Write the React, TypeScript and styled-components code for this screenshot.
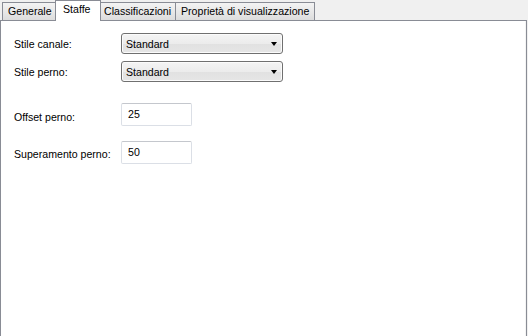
import React from "react";
import styled, { createGlobalStyle, css } from "styled-components";

const GlobalStyle = createGlobalStyle`
  html, body {
    margin: 0;
    padding: 0;
    background: #f0f0f0;
  }
  body {
    font-family: Tahoma, "Liberation Sans", Arial, sans-serif;
    font-size: 10.6px;
    color: #000;
  }
`;

const Window = styled.div`
  width: 528px;
  height: 336px;
  overflow: hidden;
  background: #f0f0f0;
  display: flex;
  flex-direction: column;
`;

const TabStrip = styled.div`
  display: flex;
  align-items: flex-end;
  height: 20px;
  padding-left: 2px;
  flex-shrink: 0;
`;

const Tab = styled.div<{ $width: number; $active?: boolean }>`
  box-sizing: border-box;
  width: ${(p) => p.$width}px;
  height: 18px;
  border: 1px solid #898c95;
  border-bottom: none;
  margin-left: -1px;
  padding: 1px 0 0 5px;
  line-height: 15px;
  white-space: nowrap;
  overflow: hidden;
  background: linear-gradient(#f3f3f3, #e6e6e6 60%, #dcdcdc);
  &:first-child {
    margin-left: 0;
  }
  ${(p) =>
    p.$active &&
    css`
      position: relative;
      z-index: 2;
      height: 21px;
      margin: 0 -2px -1px -2px;
      padding: 1px 0 0 7px;
      background: #fff;
    `}
`;

const Panel = styled.div`
  box-sizing: border-box;
  width: 527px;
  flex: 1;
  background: #fff;
  border: 1px solid #898c95;
  border-bottom: none;
  box-shadow: inset -1px 0 0 #f4f4f4;
  padding: 12px 0 0 13px;
`;

const FieldGroup = styled.div<{ $gap: number; $top?: number }>`
  display: flex;
  flex-direction: column;
  gap: ${(p) => p.$gap}px;
  margin-top: ${(p) => p.$top ?? 0}px;
`;

const Row = styled.div`
  display: flex;
  align-items: center;
`;

const Label = styled.div<{ $shift?: number }>`
  width: 107px;
  padding-top: ${(p) => (p.$shift ?? 0) * 2}px;
  white-space: nowrap;
`;

const ComboBox = styled.div`
  box-sizing: border-box;
  width: 162px;
  height: 21px;
  border: 1px solid #707070;
  border-radius: 3px;
  background: linear-gradient(#f4f4f4, #ececec 50%, #e1e1e1 51%, #e6e6e6);
  box-shadow: inset 0 0 0 1px #fbfbfb;
  display: flex;
  align-items: center;
  justify-content: space-between;
  padding: 0 5px 0 4px;
`;

const Arrow = styled.span`
  width: 0;
  height: 0;
  border-left: 3.5px solid transparent;
  border-right: 3.5px solid transparent;
  border-top: 4px solid #000;
  margin-top: 1px;
`;

const TextBox = styled.input`
  box-sizing: border-box;
  width: 71px;
  height: 23px;
  margin: 0;
  padding: 0 5px 2px 6px;
  border: 1px solid #dbdfe6;
  border-top-color: #c4c7cd;
  border-radius: 2px;
  background: #fff;
  font: inherit;
  color: #000;
  outline: none;
`;

const tabs = [
  { label: "Generale", width: 55 },
  { label: "Staffe", width: 46, active: true },
  { label: "Classificazioni", width: 78 },
  { label: "Proprietà di visualizzazione", width: 140 },
];

export default function App() {
  return (
    <>
      <GlobalStyle />
      <Window>
        <TabStrip>
          {tabs.map((t) => (
            <Tab key={t.label} $width={t.width} $active={t.active}>
              {t.label}
            </Tab>
          ))}
        </TabStrip>
        <Panel>
          <FieldGroup $gap={7}>
            <Row>
              <Label>Stile canale:</Label>
              <ComboBox>
                <span>Standard</span>
                <Arrow />
              </ComboBox>
            </Row>
            <Row>
              <Label>Stile perno:</Label>
              <ComboBox>
                <span>Standard</span>
                <Arrow />
              </ComboBox>
            </Row>
          </FieldGroup>
          <FieldGroup $gap={15} $top={21}>
            <Row>
              <Label $shift={2}>Offset perno:</Label>
              <TextBox defaultValue="25" />
            </Row>
            <Row>
              <Label $shift={1}>Superamento perno:</Label>
              <TextBox defaultValue="50" />
            </Row>
          </FieldGroup>
        </Panel>
      </Window>
    </>
  );
}
